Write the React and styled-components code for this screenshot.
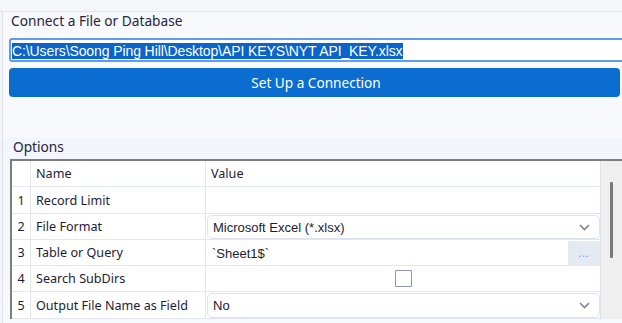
import React from "react";
import styled, { createGlobalStyle } from "styled-components";

const Global = createGlobalStyle`
  html, body { margin: 0; padding: 0; }
  body {
    background: #f3f5f9;
    overflow: hidden;
    width: 622px;
    height: 323px;
    font-family: "Noto Sans", "Open Sans", sans-serif;
  }
`;

const Page = styled.div`
  width: 622px;
  height: 323px;
  display: flex;
  flex-direction: column;
  overflow: hidden;
`;

const TopStrip = styled.div`
  height: 11px;
  flex: none;
  background: #f4f6fa;
  border-bottom: 1px solid #e2e6ee;
`;

const Panel = styled.div`
  flex: 1;
  margin-left: 2px;
  border-left: 1px solid #dde2ea;
  background: #f8f9fc;
  display: flex;
  flex-direction: column;
  min-height: 0;
`;

const ConnectSection = styled.section`
  display: flex;
  flex-direction: column;
  padding: 0 0 0 6px;
  height: 126px;
  flex: none;
`;

const SectionTitle = styled.div`
  font-size: 13.7px;
  line-height: 18px;
  color: #25253f;
  padding-left: ${(p) => p.$indent || 2}px;
  white-space: nowrap;
`;

const PathInput = styled.div`
  margin-top: 8px;
  height: 20px;
  margin-right: -20px;
  border: 2px solid #5e9cf2;
  border-radius: 3px;
  background: #ffffff;
  display: flex;
  align-items: center;
  padding-left: 1px;
`;

const Selected = styled.span`
  background: #0a64c9;
  color: #ffffff;
  font-family: "Liberation Sans", Arial, sans-serif;
  font-size: 14px;
  line-height: 16px;
  white-space: nowrap;
  letter-spacing: -0.1px;
  margin-top: 2px;
`;

const ConnectButton = styled.div`
  margin-top: 6px;
  margin-right: 2px;
  height: 29px;
  border-radius: 4px;
  background: #0b6dcf;
  color: #ffffff;
  font-size: 13.6px;
  display: flex;
  align-items: center;
  justify-content: center;
  padding-left: 3px;
`;

const OptionsSection = styled.section`
  flex: 1;
  display: flex;
  flex-direction: column;
  background: linear-gradient(#f2f5fb, #f6f8fc);
  padding-left: 7px;
  min-height: 0;
`;

const GridWrap = styled.div`
  margin-top: 3px;
  display: flex;
  border-top: 2px solid #7d7d7d;
  border-left: 2px solid #7d7d7d;
  flex: none;
`;

const Grid = styled.div`
  width: 588px;
  background: #ffffff;
  border-right: 1px solid #dce2ee;
  display: flex;
  flex-direction: column;
`;

const Row = styled.div`
  display: grid;
  grid-template-columns: 19px 175px 1fr;
  height: ${(p) => p.$h || 26}px;
  border-bottom: 1px solid #e1e6f1;
  box-sizing: border-box;
`;

const Cell = styled.div`
  display: flex;
  align-items: center;
  justify-content: ${(p) => (p.$center ? "center" : "flex-start")};
  padding-left: ${(p) => (p.$center ? 0 : 5)}px;
  border-right: ${(p) => (p.$last ? "none" : "1px solid #e1e6f1")};
  font-size: 12.6px;
  color: #1c1c36;
  white-space: nowrap;
  min-width: 0;
`;

const ValueCell = styled.div`
  display: flex;
  align-items: stretch;
  min-width: 0;
  padding: 1px 0 0 1px;
`;

const Dropdown = styled.div`
  flex: 1;
  display: flex;
  align-items: center;
  justify-content: space-between;
  border: 1px solid #dde3ef;
  border-radius: 5px;
  padding: 0 9px 0 5px;
  font-family: "Liberation Sans", Arial, sans-serif;
  font-size: 13px;
  color: #1c1c30;
`;

const PlainValue = styled.div`
  flex: 1;
  display: flex;
  align-items: center;
  padding-left: 5px;
  font-family: "Liberation Sans", Arial, sans-serif;
  font-size: 13px;
  color: #1c1c30;
`;

const EllipsisButton = styled.div`
  width: 32px;
  background: #e4e9f2;
  color: #6f90cf;
  font-size: 10px;
  display: flex;
  align-items: center;
  justify-content: center;
  letter-spacing: 1px;
`;

const CheckBox = styled.div`
  width: 15px;
  height: 15px;
  border: 1.5px solid #8c95a7;
  border-radius: 1px;
`;

const CheckCell = styled.div`
  display: flex;
  align-items: center;
  justify-content: center;
`;

const ScrollBar = styled.div`
  flex: 1;
  background: #efefef;
  display: flex;
  justify-content: center;
  padding-top: 21px;
`;

const Thumb = styled.div`
  width: 3px;
  height: 76px;
  border-radius: 1px;
  background: #7a7a7a;
`;

const Chevron = () => (
  <svg width="11" height="7" viewBox="0 0 11 7">
    <path d="M1 1 L5.5 5.5 L10 1" fill="none" stroke="#7b8494" strokeWidth="1.6" />
  </svg>
);

const rows = [
  { n: 1, name: "Record Limit", kind: "empty", h: 27 },
  { n: 2, name: "File Format", kind: "dropdown", value: "Microsoft Excel (*.xlsx)", h: 26 },
  { n: 3, name: "Table or Query", kind: "browse", value: "`Sheet1$`", h: 26 },
  { n: 4, name: "Search SubDirs", kind: "check", h: 26 },
  { n: 5, name: "Output File Name as Field", kind: "dropdown", value: "No", h: 27 },
];

function renderValue(r) {
  if (r.kind === "dropdown")
    return (
      <ValueCell>
        <Dropdown>
          <span>{r.value}</span>
          <Chevron />
        </Dropdown>
      </ValueCell>
    );
  if (r.kind === "browse")
    return (
      <ValueCell>
        <PlainValue>{r.value}</PlainValue>
        <EllipsisButton>...</EllipsisButton>
      </ValueCell>
    );
  if (r.kind === "check")
    return (
      <CheckCell>
        <CheckBox />
      </CheckCell>
    );
  return <ValueCell />;
}

export default function App() {
  return (
    <Page>
      <Global />
      <TopStrip />
      <Panel>
        <ConnectSection>
          <SectionTitle>Connect a File or Database</SectionTitle>
          <PathInput>
            <Selected>C:\Users\Soong Ping Hill\Desktop\API KEYS\NYT API_KEY.xlsx</Selected>
          </PathInput>
          <ConnectButton>Set Up a Connection</ConnectButton>
        </ConnectSection>
        <OptionsSection>
          <SectionTitle $indent={3}>Options</SectionTitle>
          <GridWrap>
            <Grid>
              <Row $h={26}>
                <Cell />
                <Cell>Name</Cell>
                <Cell $last>Value</Cell>
              </Row>
              {rows.map((r) => (
                <Row key={r.n} $h={r.h}>
                  <Cell $center>{r.n}</Cell>
                  <Cell>{r.name}</Cell>
                  {renderValue(r)}
                </Row>
              ))}
            </Grid>
            <ScrollBar>
              <Thumb />
            </ScrollBar>
          </GridWrap>
        </OptionsSection>
      </Panel>
    </Page>
  );
}
